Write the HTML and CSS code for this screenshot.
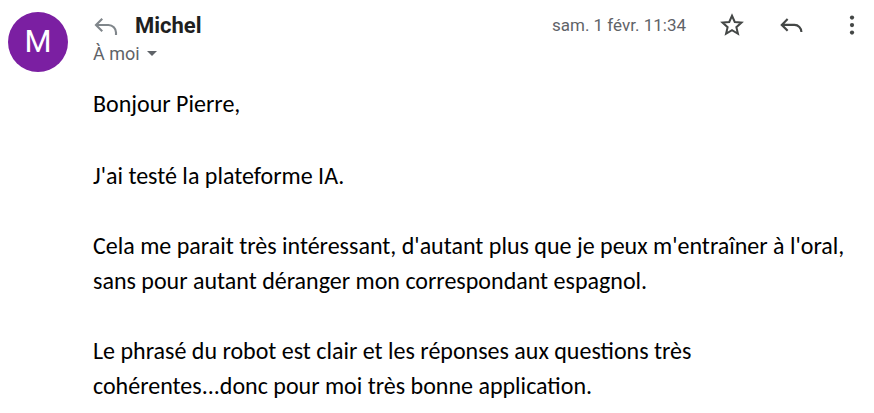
FILE: index.html
```html
<!DOCTYPE html>
<html lang="fr">
<head>
<meta charset="utf-8">
<link rel="stylesheet" href="styles.css">
</head>
<body>
<div class="msg">
  <div class="avatar">M</div>
  <div class="main">
    <div class="head">
      <div class="sender">
        <svg class="ico-reply-light" viewBox="0 0 24 24" width="30" height="30"><path d="M9 7 4 12l5 5M4.3 12H14a6 6 0 0 1 6 6v2" fill="none" stroke="#80868b" stroke-width="1.7"/></svg>
        <span class="name">Michel</span>
      </div>
      <div class="meta">
        <span class="date">sam. 1 févr. 11:34</span>
        <svg class="ico" viewBox="0 0 24 24" width="30" height="30"><path d="M12 4.6l2.2 5 5.4.5-4.1 3.6 1.25 5.3L12 16.2 7.25 19l1.25-5.3-4.1-3.6 5.4-.5z" fill="none" stroke="#444746" stroke-width="1.6" stroke-linejoin="miter"/></svg>
        <svg class="ico" viewBox="0 0 24 24" width="30" height="30"><path d="M8.5 7.2 3.8 11.9l4.7 4.7M4.1 11.9H14a5.5 5.5 0 0 1 5.5 5.5v.2" fill="none" stroke="#444746" stroke-width="1.7"/></svg>
        <svg class="ico" viewBox="0 0 24 24" width="30" height="30"><circle cx="12" cy="6" r="1.7" fill="#444746"/><circle cx="12" cy="12" r="1.7" fill="#444746"/><circle cx="12" cy="18" r="1.7" fill="#444746"/></svg>
      </div>
    </div>
    <div class="to">À moi <span class="caret"></span></div>
    <div class="body">
      <p class="greet">Bonjour Pierre,</p>
      <p>J'ai testé la plateforme IA.</p>
      <p>Cela me parait très intéressant, d'autant plus que je peux m'entraîner à l'oral,<br>sans pour autant déranger mon correspondant espagnol.</p>
      <p class="last">Le phrasé du robot est clair et les réponses aux questions très<br>cohérentes...donc pour moi très bonne application.</p>
    </div>
  </div>
</div>
</body>
</html>
```
FILE: styles.css
```css
html, body {
  margin: 0;
  padding: 0;
  background: #fff;
  overflow: hidden;
}
.msg {
  display: flex;
  align-items: flex-start;
  padding: 12px 7px 0 8px;
}
.avatar {
  flex: none;
  width: 60px;
  height: 60px;
  border-radius: 50%;
  background: #7b1fa2;
  color: #fff;
  font-family: Roboto, "Liberation Sans", sans-serif;
  font-size: 31px;
  line-height: 60px;
  text-align: center;
}
.main {
  flex: 1;
  margin-left: 25px;
}
.head {
  display: flex;
  align-items: center;
  justify-content: space-between;
  height: 26px;
}
.sender {
  display: flex;
  align-items: center;
}
.ico-reply-light {
  display: block;
  margin-left: -2px;
}
.name {
  margin-left: 14px;
  font-family: Roboto, "Liberation Sans", sans-serif;
  font-weight: 700;
  font-size: 22px;
  color: #1f1f1f;
}
.meta {
  display: flex;
  align-items: center;
  gap: 30px;
}
.date {
  font-family: Roboto, "Liberation Sans", sans-serif;
  font-size: 17px;
  color: #5f6368;
  margin-right: 1px;
}
.ico {
  display: block;
}
.to {
  margin-top: 4px;
  font-family: Roboto, "Liberation Sans", sans-serif;
  font-size: 18px;
  line-height: 24px;
  color: #5f6368;
}
.caret {
  display: inline-block;
  width: 0;
  height: 0;
  margin-left: 3px;
  vertical-align: 4px;
  border-left: 5px solid transparent;
  border-right: 5px solid transparent;
  border-top: 5px solid #5f6368;
}
.body {
  margin-top: 20px;
  font-family: Carlito, Calibri, "Open Sans", sans-serif;
  font-size: 24px;
  line-height: 35px;
  color: #000;
}
.body p {
  margin: 0 0 35px 0;
}
.body p.greet {
  margin-bottom: 37px;
}
.body p.last {
  margin-bottom: 0;
}
```
